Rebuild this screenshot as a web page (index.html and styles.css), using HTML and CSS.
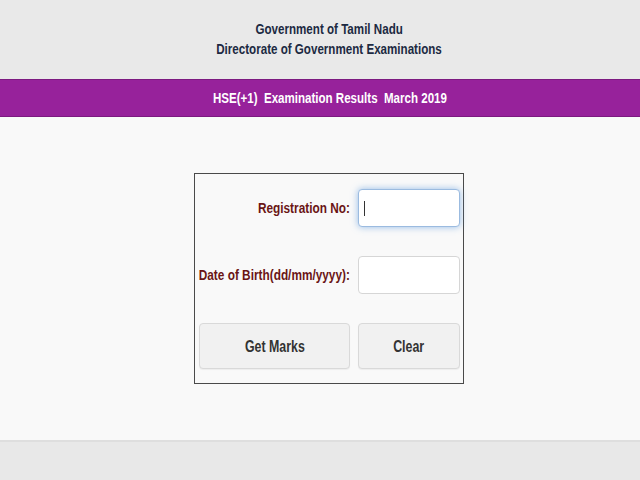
FILE: index.html
```html
<!DOCTYPE html>
<html lang="en">
<head>
<meta charset="utf-8">
<title>HSE(+1) Examination Results March 2019</title>
<link rel="stylesheet" href="styles.css">
</head>
<body>
<header class="top">
  <div class="org"><span class="sq">Government of Tamil Nadu</span></div>
  <div class="org"><span class="sq">Directorate of Government Examinations</span></div>
</header>
<div class="band"><span class="sq">HSE(+1)&nbsp; Examination Results&nbsp; March 2019</span></div>
<main class="main">
  <form class="card" onsubmit="return false;">
    <label class="lbl" for="reg"><span class="sq">Registration No:</span></label>
    <div class="field">
      <input class="inp focus" id="reg" type="text">
      <span class="caret"></span>
    </div>
    <label class="lbl" for="dob"><span class="sq">Date of Birth(dd/mm/yyyy):</span></label>
    <div class="field">
      <input class="inp" id="dob" type="text">
    </div>
    <button class="btn" type="button"><span class="sq">Get Marks</span></button>
    <button class="btn" type="reset"><span class="sq">Clear</span></button>
  </form>
</main>
<footer class="foot"></footer>
</body>
</html>
```
FILE: styles.css
```css
* { box-sizing: border-box; }
html, body { margin: 0; padding: 0; }
body {
  width: 640px;
  height: 480px;
  overflow: hidden;
  background: #f9f9f9;
  font-family: "Liberation Sans", Arial, sans-serif;
  display: flex;
  flex-direction: column;
}
.sq {
  display: inline-block;
  white-space: pre;
  transform-origin: center center;
}
.top {
  height: 79px;
  background: #e9e9e9;
  padding: 19px 0 20px 19px;
  text-align: center;
  color: #1c2a42;
  font-weight: bold;
  font-size: 14.5px;
  line-height: 20px;
}
.top .sq { transform: scaleX(0.8); }
.band {
  height: 38px;
  background: #97229b;
  border-top: 1px solid #7c1a80;
  border-bottom: 1px solid #7c1a80;
  padding-left: 19px;
  color: #ffffff;
  font-weight: bold;
  font-size: 15px;
  line-height: 36px;
  text-align: center;
}
.band .sq { transform: scaleX(0.77); }
.main {
  height: 323px;
  display: flex;
  justify-content: center;
  align-items: flex-start;
  padding: 56px 0 0 18px;
}
.card {
  width: 270px;
  border: 1px solid #4a4a4a;
  background: #f9f9f9;
  padding: 15px 3px 14px 4px;
  display: grid;
  grid-template-columns: 151px 102px;
  column-gap: 8px;
  row-gap: 29px;
  align-items: center;
  margin: 0;
}
.lbl {
  display: flex;
  justify-content: flex-end;
  color: #6a1515;
  font-weight: bold;
  font-size: 14px;
  white-space: nowrap;
  min-width: 0;
}
.lbl .sq {
  flex: none;
  transform: scaleX(0.845);
  transform-origin: right center;
}
.field { position: relative; height: 38px; }
.inp {
  display: block;
  width: 102px;
  height: 38px;
  margin: 0;
  background: #ffffff;
  border: 1px solid #d6d6d6;
  border-radius: 4px;
  outline: none;
  font: inherit;
  padding: 0 6px;
}
.inp.focus {
  border-color: #9bbbe0;
  box-shadow: 0 0 7px rgba(82, 146, 220, 0.6);
}
.caret {
  position: absolute;
  left: 6px;
  top: 12px;
  width: 1px;
  height: 15px;
  background: #333333;
}
.btn {
  height: 46px;
  margin: 0;
  padding: 0;
  background: #f1f1f1;
  border: 1px solid #d9d9d9;
  border-radius: 4px;
  color: #333333;
  font-family: inherit;
  font-weight: bold;
  font-size: 16.5px;
  cursor: pointer;
  box-shadow: 0 1px 1px rgba(0, 0, 0, 0.05);
}
.btn .sq { transform: scaleX(0.75); }
.foot {
  flex: 1;
  background: #e8e8e8;
  border-top: 2px solid #dedede;
}
```
